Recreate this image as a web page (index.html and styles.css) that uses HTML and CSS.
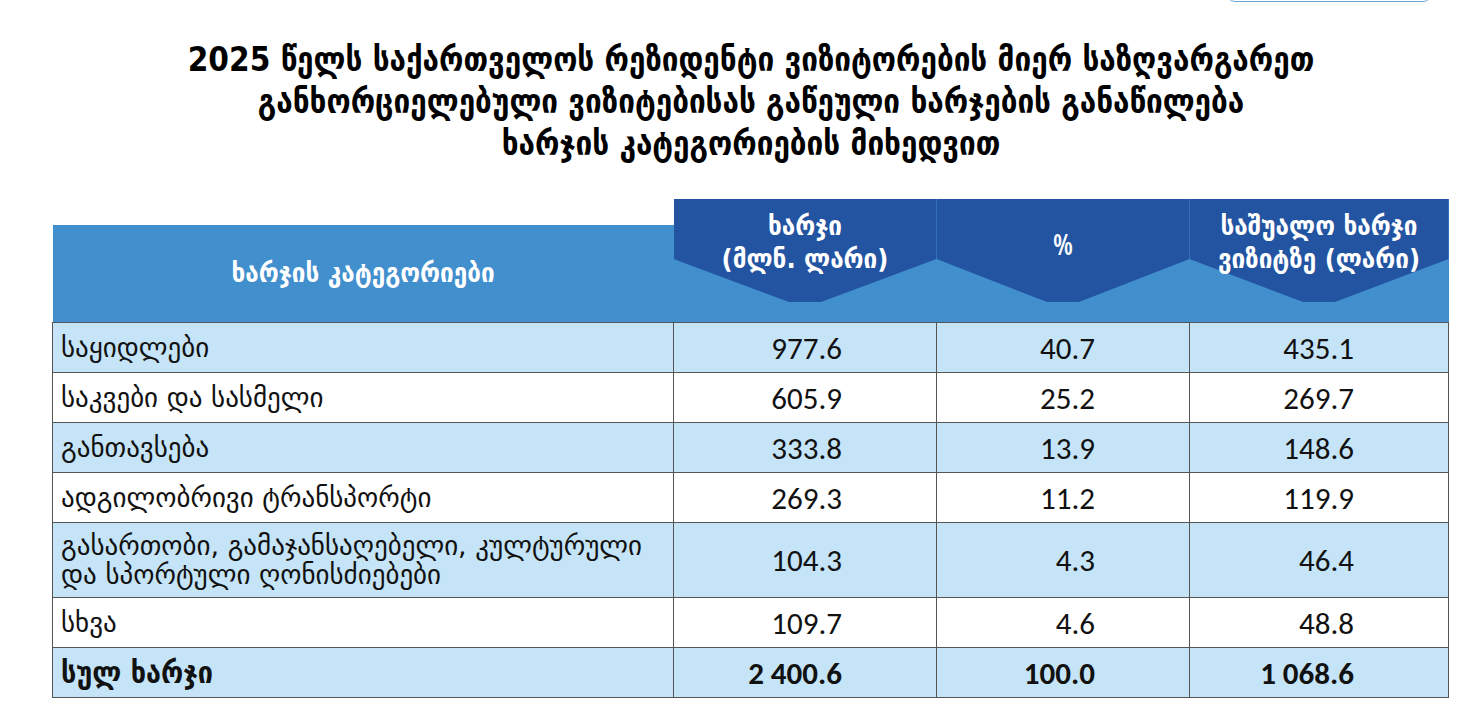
FILE: index.html
```html
<!DOCTYPE html>
<html lang="ka">
<head>
<meta charset="utf-8">
<title>ხარჯების განაწილება</title>
<link rel="stylesheet" href="styles.css">
</head>
<body>
<div class="topbar"><span class="top-btn"></span></div>
<h1 class="title">
  <span class="title-line">2025 წელს საქართველოს რეზიდენტი ვიზიტორების მიერ საზღვარგარეთ</span>
  <span class="title-line">განხორციელებული ვიზიტებისას გაწეული ხარჯების განაწილება</span>
  <span class="title-line">ხარჯის კატეგორიების მიხედვით</span>
</h1>
<table class="data">
  <colgroup>
    <col class="c-cat"><col class="c-sum"><col class="c-pct"><col class="c-avg">
  </colgroup>
  <thead>
    <tr>
      <th class="h-cat"><span class="h-cat-text">ხარჯის კატეგორიები</span></th>
      <th class="h-num"><span class="h-text">ხარჯი<br>(მლნ. ლარი)</span></th>
      <th class="h-num"><span class="h-text h-pct">%</span></th>
      <th class="h-num"><span class="h-text">საშუალო ხარჯი<br>ვიზიტზე (ლარი)</span></th>
    </tr>
  </thead>
  <tbody>
    <tr class="alt"><td class="cat">საყიდლები</td><td class="num">977.6</td><td class="num">40.7</td><td class="num">435.1</td></tr>
    <tr><td class="cat">საკვები და სასმელი</td><td class="num">605.9</td><td class="num">25.2</td><td class="num">269.7</td></tr>
    <tr class="alt"><td class="cat">განთავსება</td><td class="num">333.8</td><td class="num">13.9</td><td class="num">148.6</td></tr>
    <tr><td class="cat">ადგილობრივი ტრანსპორტი</td><td class="num">269.3</td><td class="num">11.2</td><td class="num">119.9</td></tr>
    <tr class="alt tall"><td class="cat two-line">გასართობი, გამაჯანსაღებელი, კულტურული<br>და სპორტული ღონისძიებები</td><td class="num">104.3</td><td class="num">4.3</td><td class="num">46.4</td></tr>
    <tr><td class="cat">სხვა</td><td class="num">109.7</td><td class="num">4.6</td><td class="num">48.8</td></tr>
    <tr class="alt total"><td class="cat total-label">სულ ხარჯი</td><td class="num">2 400.6</td><td class="num">100.0</td><td class="num">1 068.6</td></tr>
  </tbody>
</table>
</body>
</html>
```

FILE: styles.css
```css
html, body {
  margin: 0;
  padding: 0;
  background: #ffffff;
}
body {
  font-family: "DejaVu Sans", sans-serif;
  color: #111;
  overflow: hidden;
}
.topbar {
  display: flex;
  justify-content: flex-end;
  height: 0;
  padding-right: 28px;
}
.top-btn {
  display: block;
  width: 206px;
  height: 40px;
  margin-top: -38px;
  border: 1.5px solid #6fa8d6;
  border-radius: 9px;
  box-sizing: border-box;
}
.title {
  margin: 39px 0 0;
  display: flex;
  flex-direction: column;
  align-items: center;
  font-family: "DejaVu Sans", sans-serif;
  font-stretch: condensed;
  font-weight: bold;
  font-size: 33px;
  line-height: 42px;
  color: #000;
  padding-left: 42px;
}
.title-line {
  display: block;
  white-space: nowrap;
}
.data {
  margin: 34px 0 0 52px;
  width: 1396px;
  border-collapse: collapse;
  table-layout: fixed;
}
.c-cat { width: 621px; }
.c-sum { width: 263px; }
.c-pct { width: 253px; }
.c-avg { width: 259px; }
thead th {
  height: 123px;
  padding: 0;
  position: relative;
  color: #fff;
  font-weight: normal;
  vertical-align: top;
}
.h-cat {
  background: linear-gradient(#fff 0, #fff 26px, #428fce 26px);
}
.h-cat-text {
  display: block;
  margin-top: 57px;
  font-size: 27px;
  line-height: 33px;
  font-stretch: condensed;
  font-weight: bold;
  text-align: center;
}
.h-num {
  background: #428fce;
}
.h-num::before {
  content: "";
  position: absolute;
  inset: 0;
  background: #2354a1;
  clip-path: polygon(0 0, 100% 0, 100% 60px, calc(50% + 16px) 103px, calc(50% - 16px) 103px, 0 60px);
}
.h-text {
  position: relative;
  display: block;
  margin-top: 10px;
  font-size: 27px;
  font-stretch: condensed;
  font-weight: bold;
  line-height: 33px;
  text-align: center;
}
.h-pct {
  margin-top: 29px;
  font-family: "Open Sans", sans-serif;
  font-weight: 600;
  font-size: 28px;
}
tbody td {
  border: 1px solid #555;
  height: 49px;
  padding: 0;
  vertical-align: middle;
}
tbody tr.alt td {
  background: #c5e4f7;
}
tbody tr.tall td {
  height: 74px;
}
.cat {
  padding-left: 8px;
  font-family: "DejaVu Sans", sans-serif;
  font-size: 27px;
  line-height: 27px;
  color: #111;
}
.two-line {
  line-height: 29px;
}
.num {
  text-align: right;
  padding-right: 94px !important;
  font-family: "Carlito", "Lato", sans-serif;
  font-size: 31px;
  color: #111;
}
.total td {
  font-weight: bold;
}
.total-label {
  font-stretch: condensed;
  font-size: 30px !important;
}
```
